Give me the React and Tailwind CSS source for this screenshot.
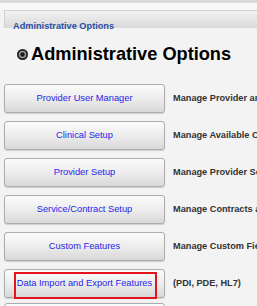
import React from 'react';

const rows = [
  { label: 'Provider User Manager', desc: 'Manage Provider and User Accounts' },
  { label: 'Clinical Setup', desc: 'Manage Available Clinical Options' },
  { label: 'Provider Setup', desc: 'Manage Provider Settings' },
  { label: 'Service/Contract Setup', desc: 'Manage Contracts and Services' },
  { label: 'Custom Features', desc: 'Manage Custom Fields' },
  { label: 'Data Import and Export Features', desc: '(PDI, PDE, HL7)', marked: true },
];

const Bullet = () => (
  <svg width="11" height="11" viewBox="0 0 11 11" className="shrink-0">
    <circle cx="5.5" cy="5.5" r="5.5" fill="#1a1a1a" />
    <circle cx="5.5" cy="5.5" r="3.8" fill="#9a9a9a" />
    <circle cx="5.5" cy="5.5" r="2.2" fill="#1a1a1a" />
  </svg>
);

const OptionButton = ({ label, marked }) => (
  <div className="relative w-[161px] h-[29px] shrink-0 rounded-[3px] border border-[#acacac] bg-gradient-to-b from-[#fbfbfb] via-[#ededed] to-[#d8d8d8] shadow-[0_1px_1px_rgba(0,0,0,0.15)] flex items-center justify-center">
    <span className="text-[9.3px] text-[#2626e8] whitespace-nowrap">{label}</span>
    {marked && (
      <span className="absolute left-[9px] top-[2px] w-[143px] h-[27px] border-2 border-[#e3141c]" />
    )}
  </div>
);

export default function App() {
  return (
    <div className="w-[257px] h-[306px] overflow-hidden bg-[#f3f3f3] font-['Liberation_Sans',Arial,sans-serif]">
      <div className="h-[3px] bg-[#d9d9d9]" />
      <div className="h-[7px] bg-[#f8f8f8]" />
      <div className="ml-[4px] h-[18px] border-l border-t border-[#d2d2d2] bg-gradient-to-b from-[#f2f2f2] to-[#d9d9d9] pl-[8px] pt-[1px]">
        <span className="text-[9.2px] font-bold leading-[17px] text-[#2b4fa6] whitespace-nowrap">
          Administrative Options
        </span>
      </div>

      <div className="mt-[16px] ml-[17px] flex items-center gap-[3px] h-[20px]">
        <Bullet />
        <h1 className="text-[18.2px] font-bold leading-[20px] text-black whitespace-nowrap">
          Administrative Options
        </h1>
      </div>

      <div className="mt-[20px] ml-[4px] flex flex-col gap-[8px]">
        {rows.map((r) => (
          <div key={r.label} className="flex items-center gap-[8px]">
            <OptionButton label={r.label} marked={r.marked} />
            <span className="text-[9.2px] font-bold text-[#333333] whitespace-nowrap">{r.desc}</span>
          </div>
        ))}
      </div>
      <div className="mt-[5px] ml-[4px] w-[161px] h-[29px] rounded-[3px] border border-[#acacac] bg-[#fbfbfb]" />
    </div>
  );
}
